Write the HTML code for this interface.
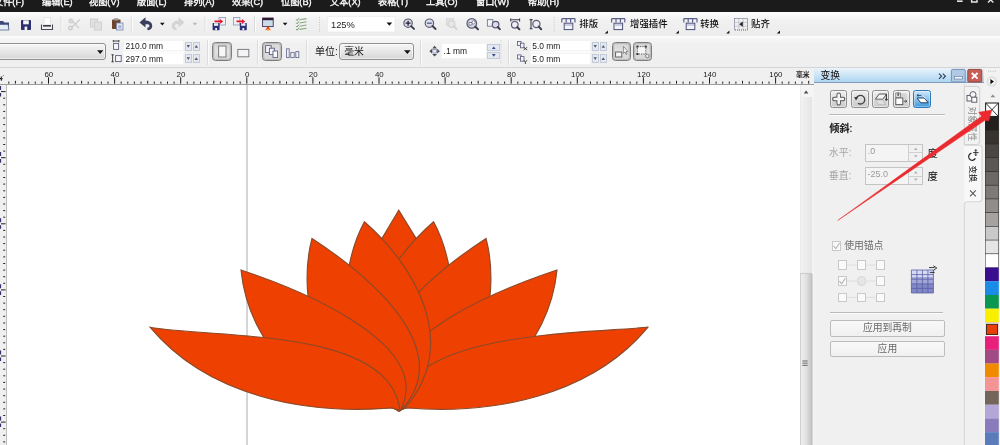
<!DOCTYPE html>
<html lang="zh">
<head>
<meta charset="utf-8">
<title>CorelDRAW</title>
<style>
html,body{margin:0;padding:0;}
body{width:1000px;height:445px;overflow:hidden;position:relative;background:#fff;
 font-family:"Liberation Sans","Noto Sans CJK SC",sans-serif;font-size:9.5px;color:#111;}
.abs{position:absolute;}
#menubar{left:0;top:0;width:1000px;height:12px;background:#1b1b1b;overflow:hidden;}
#menubar span{position:absolute;top:-4.3px;font-size:9.2px;line-height:12px;color:#fafafa;white-space:nowrap;-webkit-text-stroke:0.35px #fafafa;}
#tb1{left:0;top:12px;width:1000px;height:24px;background:linear-gradient(#fcfcfc,#f1f1f1 35%,#ececec);}
#tb2{left:0;top:36px;width:1000px;height:31px;background:linear-gradient(#fcfcfc,#fbfbfb 1.5px,#f6f6f6 2.5px,#f0f0f0 9px,#efefef);}
#ruler{left:0;top:66.5px;width:814px;height:18.5px;background:#f0f0f0;border-top:1px solid #d6d6d6;border-bottom:1px solid #9c9c9c;box-sizing:border-box;}
#lruler{left:0;top:85px;width:7px;height:360px;background:#f0f0f0;border-right:1.2px solid #bdbdbd;box-sizing:border-box;}
#canvas{left:7px;top:85px;width:794px;height:360px;background:#fff;}
#vscroll{left:801px;top:85px;width:13px;height:360px;background:#f0f0f0;}
#docker{left:814px;top:68px;width:148px;height:377px;background:#f0f0f0;}
#tabs{left:962px;top:68px;width:22px;height:377px;background:#f0f0f0;}
#palette{left:984px;top:68px;width:16px;height:377px;background:#f0f0f0;}
.tx{position:absolute;white-space:nowrap;}

.combo{position:absolute;box-sizing:border-box;border:1px solid #8f8f8f;border-radius:3px;background:linear-gradient(#f6f6f6,#e9e9e9 45%,#d6d6d6);box-shadow:inset 0 0 0 1px rgba(255,255,255,.55);}
.inp{position:absolute;background:#fff;box-sizing:border-box;border:1px solid #f3f3f3;}
.sp{position:absolute;box-sizing:border-box;background:#e4e8f1;border:1px solid #c3cad9;}
.pbtn{position:absolute;box-sizing:border-box;border:1px solid #7d7d7d;border-radius:3.5px;background:linear-gradient(#d2d2d2,#e3e3e3 50%,#d0d0d0);box-shadow:inset 0 0 0 1.5px #bdbdbd, inset 0 0 0 2.2px #e8e8e8;}
.vsep{position:absolute;width:1px;background:#dcdcdc;border-right:1px solid #fbfbfb;}
.t85{font-size:8.45px;line-height:10px;color:#1a1a1a;}

#dtitle{left:814px;top:68px;width:170px;height:14.4px;background:linear-gradient(#eaf4fb,#cfe6f7 45%,#aed5f1);border-bottom:1px solid #7d9dbb;box-sizing:content-box;}
.dbtn{position:absolute;box-sizing:border-box;width:17.6px;height:17.4px;top:90.2px;border:1px solid #8e8e8e;border-radius:2.5px;background:linear-gradient(#f0f0f0,#dcdcdc 50%,#c9c9c9);box-shadow:inset 0 0 0 1px rgba(255,255,255,.45);}
.dbtn.on{border-color:#2f79b8;background:linear-gradient(#cfe7f9,#8cc4ec 50%,#3f98da);box-shadow:inset 0 0 0 1px rgba(255,255,255,.35);}
.dinp{position:absolute;box-sizing:border-box;left:865px;width:58px;height:18px;border:1px solid #c4c4c4;background:#f4f4f4;}
.dinp i{position:absolute;right:0;top:0;width:13.4px;height:16px;border-left:1px solid #d0d0d0;background:#f1f1f1;}
.dinp i:before{content:"";position:absolute;left:0;top:7.6px;width:13.4px;height:1px;background:#d0d0d0;}
.cb{position:absolute;box-sizing:border-box;width:9.6px;height:9.6px;border:1px solid #c9c9c9;background:#fafafa;}
.abtn{position:absolute;box-sizing:border-box;left:829.8px;width:115.2px;height:16.2px;border:1px solid #bcbcbc;border-radius:2px;background:linear-gradient(#f9f9f9,#f0f0f0);text-align:center;font-size:9.8px;line-height:14px;color:#6a6a6a;}
.tbt{top:6px;font-size:9.4px;line-height:12px;color:#111;font-weight:500;}
</style>
</head>
<body>
<div id="root" style="position:absolute;left:0;top:0;width:1000px;height:445px;overflow:hidden;will-change:transform">
<div id="menubar" class="abs">
<span style="left:-6px">文件(F)</span>
<span style="left:42px">编辑(E)</span>
<span style="left:89px">视图(V)</span>
<span style="left:137px">版面(L)</span>
<span style="left:184px">排列(A)</span>
<span style="left:232px">效果(C)</span>
<span style="left:281px">位图(B)</span>
<span style="left:330px">文本(X)</span>
<span style="left:378px">表格(T)</span>
<span style="left:426px">工具(O)</span>
<span style="left:476px">窗口(W)</span>
<span style="left:528px">帮助(H)</span><svg class="abs" style="left:950px;top:0" width="50" height="6" viewBox="950 0 50 6"><rect x="957" y="0.4" width="5.6" height="1.6" fill="#e8e8e8"/><path d="M971.6,0 V2 H977 V0" stroke="#e8e8e8" stroke-width="1.4" fill="none"/><path d="M988,2.6 L990.6,0 M993.4,2.6 L990.8,0" stroke="#e8e8e8" stroke-width="1.4"/></svg>
</div>
<div id="tb1" class="abs">
<svg class="abs" style="left:0;top:0" width="1000" height="24" viewBox="0 12 1000 24">
<!-- open folder -->
<path d="M-3,21 L3,21 L4.5,22.5 L9,22.5 L9,30 L-3,30 Z" fill="#3b4778"/>
<path d="M-4,24.5 L8,24.5 L9,30 L-3,30 Z" fill="#e6ecf6" stroke="#56628e" stroke-width="0.8"/>
<!-- save -->
<rect x="21" y="20" width="10" height="10" rx="0.8" fill="#2d2f6e"/>
<rect x="23.2" y="20.3" width="5.6" height="4" fill="#f4f6fb"/>
<rect x="24.6" y="26.6" width="2.6" height="3.4" fill="#f4f6fb"/>
<!-- print -->
<rect x="44" y="17.5" width="6.5" height="7" fill="#fff" stroke="#d6d6d6" stroke-width="0.6"/>
<path d="M41.5,24.5 L41.5,29.5 L52.5,29.5 L52.5,24.5" fill="#f2f2f2" stroke="#4a4a55" stroke-width="1.1"/>
<rect x="43" y="25" width="8" height="1.6" fill="#3c3c46"/>
<!-- sep -->
<rect x="60.6" y="16" width="1" height="16" fill="#dadada"/><rect x="61.6" y="16" width="1" height="16" fill="#fdfdfd"/>
<!-- cut disabled -->
<g stroke="#cfcfcf" stroke-width="1.4" fill="none"><path d="M70,19 L79,28 M80,19.5 L71,28"/><circle cx="70.5" cy="28" r="1.8"/><circle cx="71" cy="21" r="1.8"/></g>
<!-- copy disabled -->
<g fill="#e1e1e1" stroke="#cfcfcf" stroke-width="0.9"><rect x="90.5" y="19" width="7" height="8"/><rect x="94.5" y="22" width="7" height="8"/></g>
<!-- paste -->
<rect x="112" y="19.5" width="8.5" height="9.5" rx="0.8" fill="#70442a"/>
<rect x="114.2" y="18.2" width="4" height="2.4" fill="#9a9aa0"/>
<rect x="116.5" y="23" width="6.5" height="7" fill="#dfe6f4" stroke="#7a86b0" stroke-width="0.8"/>
<rect x="118.3" y="25.3" width="3" height="3" fill="#a8b2d2"/>
<rect x="130.8" y="16" width="1" height="16" fill="#dadada"/><rect x="131.8" y="16" width="1" height="16" fill="#fdfdfd"/>
<!-- undo -->
<path d="M139.5,22.5 L145.5,17.2 L145.5,20.4 C150.5,20.4 152.6,23.5 152.2,26.5 C151.8,29 150,30.2 147.6,30.2 L147.2,27.8 C149,27.6 149.6,26.6 149.4,25.4 C149.2,24.3 148,24 145.5,24.2 L145.5,27.6 Z" fill="#3a3f60"/>
<path d="M160,22.8 L164.6,22.8 L162.3,25.4 Z" fill="#111"/>
<!-- redo disabled -->
<path d="M184.5,22.5 L178.5,17.2 L178.5,20.4 C173.5,20.4 171.4,23.5 171.8,26.5 C172.2,29 174,30.2 176.4,30.2 L176.8,27.8 C175,27.6 174.4,26.6 174.6,25.4 C174.8,24.3 176,24 178.5,24.2 L178.5,27.6 Z" fill="#d4d4d4"/>
<path d="M192.6,22.8 L197.2,22.8 L194.9,25.4 Z" fill="#b9b9b9"/>
<rect x="204.6" y="16" width="1" height="16" fill="#dadada"/><rect x="205.6" y="16" width="1" height="16" fill="#fdfdfd"/>
<!-- import -->
<rect x="219" y="17.5" width="6.5" height="7.5" fill="#eef1f7" stroke="#8d97b5" stroke-width="0.8"/>
<rect x="212.6" y="23" width="7" height="7.2" rx="0.6" fill="#2d3278"/>
<rect x="214" y="23.2" width="4.2" height="2.6" fill="#eef1f7"/><rect x="215.2" y="28" width="1.8" height="2.2" fill="#eef1f7"/>
<path d="M214.5,20.6 L220,20.6 L220,19 L223.2,21.4 L220,23.8 L220,22.2 L214.5,22.2 Z" fill="#e0182a"/>
<!-- export -->
<rect x="233.4" y="17.5" width="6.5" height="7.5" fill="#eef1f7" stroke="#8d97b5" stroke-width="0.8"/>
<rect x="239.8" y="23" width="7" height="7.2" rx="0.6" fill="#2d3278"/>
<rect x="241.2" y="23.2" width="4.2" height="2.6" fill="#eef1f7"/><rect x="242.4" y="28" width="1.8" height="2.2" fill="#eef1f7"/>
<path d="M236.5,20.6 L242,20.6 L242,19 L245.2,21.4 L242,23.8 L242,22.2 L236.5,22.2 Z" fill="#e0182a"/>
<rect x="254" y="16" width="1" height="16" fill="#dadada"/><rect x="255" y="16" width="1" height="16" fill="#fdfdfd"/>
<!-- app launcher -->
<rect x="262.6" y="18" width="10.6" height="8.6" fill="#c9dcea" stroke="#4a3050" stroke-width="0.9"/>
<rect x="262.6" y="18" width="10.6" height="2.2" fill="#2a1830"/>
<path d="M265,30.4 L268,26 L271,30.4 L268,29 Z" fill="#e83a10"/><circle cx="268" cy="29.6" r="1.2" fill="#f6a020"/>
<path d="M282.8,22.8 L287.4,22.8 L285.1,25.4 Z" fill="#111"/>
<!-- welcome lines -->
<g stroke="#8aa882" stroke-width="1.1" fill="none"><path d="M299.5,19.8 L306.5,18.6 M299.5,23 L306.5,21.8 M299.5,26.2 L306.5,25 M299.5,29.4 L306.5,28.2"/></g>
<g stroke="#6f9a66" stroke-width="1" fill="none"><path d="M296.2,19.4 L297.2,20.6 L298.8,18.2 M296.2,22.6 L297.2,23.8 L298.8,21.4 M296.2,25.8 L297.2,27 L298.8,24.6 M296.2,29 L297.2,30.2 L298.8,27.8"/></g>
<path d="M319.5,17 L319.5,32" stroke="#c6c6c6" stroke-width="1" stroke-dasharray="1,1.4"/>
<!-- zoom combo -->
<rect x="327.5" y="16.5" width="67.5" height="15.5" fill="#fff" stroke="#ececec" stroke-width="0.8"/>
<path d="M386.6,22.6 L392.2,22.6 L389.4,25.8 Z" fill="#111"/>
</svg>
<span class="tx" style="left:331px;top:6.6px;font-size:9.3px;line-height:12px;color:#222">125%</span>
<svg class="abs" style="left:0;top:0" width="1000" height="24" viewBox="0 12 1000 24">
<circle cx="408.1" cy="23.2" r="4.2" fill="#d9dcea" stroke="#5c5c74" stroke-width="1.2"/><path d="M411.1,26.1 L414.0,28.9" stroke="#3e3e4e" stroke-width="2" stroke-linecap="round"/><path d="M405.6,23.2 H410.6 M408.1,20.7 V25.7" stroke="#22222e" stroke-width="1.3"/>
<circle cx="429.4" cy="23.2" r="4.2" fill="#d9dcea" stroke="#5c5c74" stroke-width="1.2"/><path d="M432.5,26.0 L435.6,28.9" stroke="#3e3e4e" stroke-width="2" stroke-linecap="round"/><path d="M427,23.2 H431.8" stroke="#5a5a8a" stroke-width="1.3"/>
<rect x="446.5" y="18.5" width="7" height="7" fill="#e4e4e4" stroke="#d6d6d6" stroke-width="0.8"/><circle cx="451.5" cy="24.0" r="3.4" fill="#e6e6e6" stroke="#d3d3d3" stroke-width="1.2"/><path d="M453.9,26.4 L456.6,29.0" stroke="#d3d3d3" stroke-width="2" stroke-linecap="round"/>
<circle cx="471.8" cy="23.4" r="4.8" fill="#d9dcea" stroke="#5c5c74" stroke-width="1.2"/><path d="M475.3,26.7 L478.0,29.2" stroke="#3e3e4e" stroke-width="2" stroke-linecap="round"/><rect x="469" y="22.4" width="3" height="2.6" fill="#fff" stroke="#5c5c74" stroke-width="0.7"/><circle cx="473.6" cy="22.4" r="1.6" fill="#fff" stroke="#5c5c74" stroke-width="0.7"/>
<rect x="487.4" y="19.6" width="5.4" height="6.6" fill="#f3f4f8" stroke="#777a90" stroke-width="0.9"/><circle cx="495.6" cy="24.6" r="3.3" fill="#d9dcea" stroke="#5c5c74" stroke-width="1.2"/><path d="M497.8,27.0 L499.8,29.2" stroke="#3e3e4e" stroke-width="2" stroke-linecap="round"/>
<path d="M510.5,19.8 H519.8 M510.7,18.4 V21.4 M519.6,18.4 V21.4" stroke="#3e3e4e" stroke-width="1.1"/><circle cx="514.8" cy="24.8" r="3.3" fill="#eceef4" stroke="#5c5c74" stroke-width="1.2"/><path d="M517.2,27.1 L519.4,29.3" stroke="#3e3e4e" stroke-width="2" stroke-linecap="round"/>
<path d="M531,19.4 V29 M529.6,19.6 H532.6 M529.6,28.8 H532.6" stroke="#3e3e4e" stroke-width="1.1"/><circle cx="536.4" cy="24.0" r="3.6" fill="#eceef4" stroke="#5c5c74" stroke-width="1.2"/><path d="M538.8,26.6 L541.2,29.2" stroke="#3e3e4e" stroke-width="2" stroke-linecap="round"/>
<path d="M554.2,17 L554.2,32" stroke="#c6c6c6" stroke-width="1" stroke-dasharray="1,1.4"/>
<g transform="translate(561.8,0)"><path d="M0,18.6 H13.2 M0,18.6 V22.4 M4.4,18.6 V22.4 M8.8,18.6 V22.4 M13.2,18.6 V22.4" stroke="#5a5f8a" stroke-width="1.2" fill="none"/><rect x="2.4" y="23.2" width="8.6" height="6.4" fill="#f4f5fa" stroke="#4a4f78" stroke-width="1"/><rect x="3.2" y="24" width="7" height="2" fill="#c9cde2"/></g><g transform="translate(611.6,0)"><path d="M0,18.6 H13.2 M0,18.6 V22.4 M4.4,18.6 V22.4 M8.8,18.6 V22.4 M13.2,18.6 V22.4" stroke="#5a5f8a" stroke-width="1.2" fill="none"/><rect x="2.4" y="23.2" width="8.6" height="6.4" fill="#f4f5fa" stroke="#4a4f78" stroke-width="1"/><rect x="3.2" y="24" width="7" height="2" fill="#c9cde2"/></g><g transform="translate(683.8,0)"><path d="M0,18.6 H13.2 M0,18.6 V22.4 M4.4,18.6 V22.4 M8.8,18.6 V22.4 M13.2,18.6 V22.4" stroke="#5a5f8a" stroke-width="1.2" fill="none"/><rect x="2.4" y="23.2" width="8.6" height="6.4" fill="#f4f5fa" stroke="#4a4f78" stroke-width="1"/><rect x="3.2" y="24" width="7" height="2" fill="#c9cde2"/></g><g transform="translate(734,0)"><rect x="0.5" y="18.5" width="13" height="11.5" fill="none" stroke="#555a80" stroke-width="1" stroke-dasharray="1,1"/><path d="M4.8,18.5 V30 M9.2,18.5 V30 M0.5,22.3 H13.5 M0.5,26.2 H13.5" stroke="#8a8eb0" stroke-width="0.7" stroke-dasharray="1,1"/><path d="M8.8,21.6 L8.8,26.8 L5.2,24.2 Z" fill="#222"/></g>
<path d="M604.7,33.4 L607.9,33.4 L607.9,30.6 Z" fill="#111"/><path d="M675.7,33.4 L678.9,33.4 L678.9,30.6 Z" fill="#111"/><path d="M726.2,33.4 L729.4,33.4 L729.4,30.6 Z" fill="#111"/><path d="M776.8,33.4 L780.0,33.4 L780.0,30.6 Z" fill="#111"/></svg>
<span class="tx tbt" style="left:579.3px">排版</span><span class="tx tbt" style="left:630.0px">增强插件</span><span class="tx tbt" style="left:700.2px">转换</span><span class="tx tbt" style="left:751.0px">贴齐</span>
</div>
<div id="tb2" class="abs">
<div class="combo" style="left:-6px;top:7.4px;width:111.5px;height:17px"></div>
<div class="inp" style="left:123px;top:4.0px;width:61.4px;height:11px"></div><div class="inp" style="left:123px;top:17.4px;width:61.4px;height:11.4px"></div>
<div class="abs" style="left:123px;top:14.5px;width:61.4px;height:3.5px;background:#fbfbfb"></div><div class="abs" style="left:529.8px;top:14.5px;width:61.4px;height:3.5px;background:#fbfbfb"></div><span class="tx t85" style="left:125.6px;top:5.0px">210.0 mm</span><span class="tx t85" style="left:125.6px;top:18.1px">297.0 mm</span>
<div class="sp" style="left:184.9px;top:5.7px;width:6.8px;height:9.0px"></div><div class="sp" style="left:192.9px;top:5.7px;width:6.8px;height:9.0px"></div><div class="sp" style="left:184.9px;top:18.0px;width:6.8px;height:8.9px"></div><div class="sp" style="left:192.9px;top:18.0px;width:6.8px;height:8.9px"></div>
<div class="vsep" style="left:207px;top:4px;height:25px"></div><div class="vsep" style="left:257px;top:4px;height:25px"></div><div class="vsep" style="left:305.6px;top:4px;height:25px"></div><div class="vsep" style="left:420.2px;top:4px;height:25px"></div><div class="vsep" style="left:508px;top:4px;height:25px"></div>
<div class="pbtn" style="left:212.4px;top:6.2px;width:19.6px;height:19px"></div><div class="pbtn" style="left:262px;top:6.2px;width:19.5px;height:19px"></div>
<div class="pbtn" style="left:612px;top:6.2px;width:19.3px;height:19px"></div><div class="pbtn" style="left:633px;top:6.2px;width:19.3px;height:19px"></div>
<span class="tx" style="left:315px;top:10.2px;font-size:10px;line-height:12px;color:#111">单位:</span>
<div class="combo" style="left:339.3px;top:7.4px;width:74.7px;height:17px"></div><span class="tx" style="left:344.2px;top:10.0px;font-size:9.8px;line-height:12px;color:#111">毫米</span>
<div class="inp" style="left:440.6px;top:7.4px;width:46px;height:16px"></div><span class="tx t85" style="left:443.6px;top:10.3px">.1 mm</span>
<div class="sp" style="left:487.4px;top:8.2px;width:12.8px;height:7px"></div><div class="sp" style="left:487.4px;top:15.8px;width:12.8px;height:7px"></div>
<div class="inp" style="left:529.8px;top:4.0px;width:61.4px;height:11px"></div><div class="inp" style="left:529.8px;top:17.4px;width:61.4px;height:11.4px"></div>
<span class="tx t85" style="left:532.2px;top:5.0px">5.0 mm</span><span class="tx t85" style="left:532.2px;top:18.1px">5.0 mm</span>
<div class="sp" style="left:591.8px;top:5.7px;width:6.8px;height:9.0px"></div><div class="sp" style="left:599.8px;top:5.7px;width:7.0px;height:9.0px"></div><div class="sp" style="left:591.8px;top:18.0px;width:6.8px;height:8.9px"></div><div class="sp" style="left:599.8px;top:18.0px;width:7.0px;height:8.9px"></div>
<svg class="abs" style="left:0;top:0" width="1000" height="32" viewBox="0 36 1000 32">
<path d="M97.1,50.3 L103.3,50.3 L100.2,54.1 Z" fill="#111"/><path d="M404.0,50.3 L410.6,50.3 L407.3,54.1 Z" fill="#111"/>
<path d="M186.6,45.1 L190.0,45.1 L188.3,47.7 Z" fill="#555a66"/><path d="M194.6,47.7 L198.0,47.7 L196.3,45.1 Z" fill="#555a66"/><path d="M186.6,57.3 L190.0,57.3 L188.3,59.9 Z" fill="#555a66"/><path d="M194.6,59.9 L198.0,59.9 L196.3,57.3 Z" fill="#555a66"/><path d="M593.5,45.1 L596.9,45.1 L595.2,47.7 Z" fill="#555a66"/><path d="M601.6,47.7 L605.0,47.7 L603.3,45.1 Z" fill="#555a66"/><path d="M593.5,57.3 L596.9,57.3 L595.2,59.9 Z" fill="#555a66"/><path d="M601.6,59.9 L605.0,59.9 L603.3,57.3 Z" fill="#555a66"/><path d="M491.9,49.1 L495.7,49.1 L493.8,46.5 Z" fill="#3a4a8a"/><path d="M491.9,54.1 L495.7,54.1 L493.8,56.7 Z" fill="#3a4a8a"/>
<rect x="113.6" y="43.4" width="5" height="6" fill="#f6f6fa" stroke="#5a5f7a" stroke-width="0.9"/><path d="M113.2,41 H119 M113.3,40 V42.2 M118.9,40 V42.2" stroke="#333" stroke-width="0.9" fill="none"/>
<rect x="115.6" y="55.6" width="5.6" height="6" fill="#f6f6fa" stroke="#5a5f7a" stroke-width="0.9"/><path d="M112.6,54.6 V62 M111.4,54.8 H113.8 M111.4,61.8 H113.8" stroke="#333" stroke-width="0.9" fill="none"/>
<rect x="218.6" y="46" width="7.4" height="11" fill="#f7f7f7" stroke="#7c7c7c" stroke-width="1"/>
<rect x="237.8" y="49.4" width="11" height="7.4" fill="#f4f4f4" stroke="#7c7c84" stroke-width="1"/>
<rect x="265.6" y="45.6" width="5.6" height="7" fill="#f4f4f8" stroke="#5a5f80" stroke-width="0.9"/><rect x="269.4" y="48.2" width="5" height="6.4" fill="#f4f4f8" stroke="#5a5f80" stroke-width="0.9"/><rect x="273" y="51" width="4.6" height="6.4" fill="#fdfdfd" stroke="#5a5f80" stroke-width="0.9"/>
<g fill="#f4f4f8" stroke="#6a6f90" stroke-width="0.9"><rect x="286.6" y="48.8" width="2.6" height="8.8"/><rect x="290.8" y="52.6" width="3.4" height="5"/><rect x="295.8" y="51.6" width="3" height="6"/></g>
<g fill="#4a4a5a"><path d="M434.6,45.8 L437,48.4 L432.2,48.4 Z"/><path d="M434.6,56.6 L437,54 L432.2,54 Z"/><path d="M429.4,51.2 L432,48.8 L432,53.6 Z"/><path d="M439.8,51.2 L437.2,48.8 L437.2,53.6 Z"/></g><rect x="432.8" y="49.4" width="3.6" height="3.6" fill="#e9ebf5" stroke="#7a7f9a" stroke-width="0.7"/>
<path d="M501,40 V64" stroke="#d4d4d4" stroke-width="1.2" stroke-dasharray="1,1.2"/>
<g transform="translate(517,41.0)"><rect x="0.5" y="0.5" width="3.6" height="4" fill="#f2f2f8" stroke="#555a78" stroke-width="0.8"/><rect x="3.4" y="2.2" width="3.6" height="4.6" fill="#f2f2f8" stroke="#555a78" stroke-width="0.8"/><path d="M6.6,6.2 L10.2,9 M10.2,6.2 L6.6,9" stroke="#333" stroke-width="0.9"/></g><g transform="translate(517,54.4)"><rect x="0.5" y="0.5" width="3.6" height="4" fill="#f2f2f8" stroke="#555a78" stroke-width="0.8"/><rect x="3.4" y="2.2" width="3.6" height="4.6" fill="#f2f2f8" stroke="#555a78" stroke-width="0.8"/><path d="M6.8,5.8 L8.4,7.8 L10,5.8 M8.4,7.8 V9.6" stroke="#333" stroke-width="0.9" fill="none"/></g>
<rect x="615.6" y="52" width="6.2" height="5" fill="#f5f5f5" stroke="#555" stroke-width="0.9"/><path d="M623.4,46.4 L623.4,53.4 L625,52 L626.2,54.6 L627.2,54 L626,51.6 L628,51.4 Z" fill="#f2f2f2" stroke="#6a6a72" stroke-width="0.7"/><path d="M626,44.4 H628.6 V50" stroke="#b5b5b5" stroke-width="0.7" fill="none" stroke-dasharray="1,1"/>
<rect x="637.4" y="46.6" width="8.4" height="7.4" fill="#f6f6f6" stroke="#444" stroke-width="0.8" stroke-dasharray="1.4,1"/><g fill="#333"><rect x="636.4" y="45.6" width="2" height="2"/><rect x="644.8" y="45.6" width="2" height="2"/><rect x="636.4" y="53" width="2" height="2"/></g><circle cx="647.4" cy="56" r="1.8" fill="#eee" stroke="#555" stroke-width="0.7"/>
</svg>
</div>
<div id="ruler" class="abs">
<svg class="abs" style="left:0;top:-0.5px" width="814" height="18" viewBox="0 67 814 18">
<path d="M8.8,81.6 V83.7 M15.4,80.8 V83.7 M22.1,81.6 V83.7 M28.7,81.6 V83.7 M35.3,81.6 V83.7 M41.9,81.6 V83.7 M48.5,77.3 V83.7 M55.1,81.6 V83.7 M61.7,81.6 V83.7 M68.3,81.6 V83.7 M74.9,81.6 V83.7 M81.6,80.8 V83.7 M88.2,81.6 V83.7 M94.8,81.6 V83.7 M101.4,81.6 V83.7 M108.0,81.6 V83.7 M114.6,77.3 V83.7 M121.2,81.6 V83.7 M127.8,81.6 V83.7 M134.4,81.6 V83.7 M141.0,81.6 V83.7 M147.7,80.8 V83.7 M154.3,81.6 V83.7 M160.9,81.6 V83.7 M167.5,81.6 V83.7 M174.1,81.6 V83.7 M180.7,77.3 V83.7 M187.3,81.6 V83.7 M193.9,81.6 V83.7 M200.5,81.6 V83.7 M207.1,81.6 V83.7 M213.8,80.8 V83.7 M220.4,81.6 V83.7 M227.0,81.6 V83.7 M233.6,81.6 V83.7 M240.2,81.6 V83.7 M246.8,77.3 V83.7 M253.4,81.6 V83.7 M260.0,81.6 V83.7 M266.6,81.6 V83.7 M273.2,81.6 V83.7 M279.9,80.8 V83.7 M286.5,81.6 V83.7 M293.1,81.6 V83.7 M299.7,81.6 V83.7 M306.3,81.6 V83.7 M312.9,77.3 V83.7 M319.5,81.6 V83.7 M326.1,81.6 V83.7 M332.7,81.6 V83.7 M339.3,81.6 V83.7 M346.0,80.8 V83.7 M352.6,81.6 V83.7 M359.2,81.6 V83.7 M365.8,81.6 V83.7 M372.4,81.6 V83.7 M379.0,77.3 V83.7 M385.6,81.6 V83.7 M392.2,81.6 V83.7 M398.8,81.6 V83.7 M405.4,81.6 V83.7 M412.1,80.8 V83.7 M418.7,81.6 V83.7 M425.3,81.6 V83.7 M431.9,81.6 V83.7 M438.5,81.6 V83.7 M445.1,77.3 V83.7 M451.7,81.6 V83.7 M458.3,81.6 V83.7 M464.9,81.6 V83.7 M471.5,81.6 V83.7 M478.2,80.8 V83.7 M484.8,81.6 V83.7 M491.4,81.6 V83.7 M498.0,81.6 V83.7 M504.6,81.6 V83.7 M511.2,77.3 V83.7 M517.8,81.6 V83.7 M524.4,81.6 V83.7 M531.0,81.6 V83.7 M537.6,81.6 V83.7 M544.2,80.8 V83.7 M550.9,81.6 V83.7 M557.5,81.6 V83.7 M564.1,81.6 V83.7 M570.7,81.6 V83.7 M577.3,77.3 V83.7 M583.9,81.6 V83.7 M590.5,81.6 V83.7 M597.1,81.6 V83.7 M603.7,81.6 V83.7 M610.4,80.8 V83.7 M617.0,81.6 V83.7 M623.6,81.6 V83.7 M630.2,81.6 V83.7 M636.8,81.6 V83.7 M643.4,77.3 V83.7 M650.0,81.6 V83.7 M656.6,81.6 V83.7 M663.2,81.6 V83.7 M669.8,81.6 V83.7 M676.5,80.8 V83.7 M683.1,81.6 V83.7 M689.7,81.6 V83.7 M696.3,81.6 V83.7 M702.9,81.6 V83.7 M709.5,77.3 V83.7 M716.1,81.6 V83.7 M722.7,81.6 V83.7 M729.3,81.6 V83.7 M735.9,81.6 V83.7 M742.5,80.8 V83.7 M749.2,81.6 V83.7 M755.8,81.6 V83.7 M762.4,81.6 V83.7 M769.0,81.6 V83.7 M775.6,77.3 V83.7 M782.2,81.6 V83.7 M788.8,81.6 V83.7 M795.4,81.6 V83.7 M802.0,81.6 V83.7 M808.7,80.8 V83.7 " stroke="#1c1c1c" stroke-width="1" fill="none"/>
<text x="48.8" y="76.6" text-anchor="middle" font-size="7.9" fill="#1a1a1a" font-family="Liberation Sans, sans-serif">60</text><text x="114.9" y="76.6" text-anchor="middle" font-size="7.9" fill="#1a1a1a" font-family="Liberation Sans, sans-serif">40</text><text x="181.0" y="76.6" text-anchor="middle" font-size="7.9" fill="#1a1a1a" font-family="Liberation Sans, sans-serif">20</text><text x="247.1" y="76.6" text-anchor="middle" font-size="7.9" fill="#1a1a1a" font-family="Liberation Sans, sans-serif">0</text><text x="313.2" y="76.6" text-anchor="middle" font-size="7.9" fill="#1a1a1a" font-family="Liberation Sans, sans-serif">20</text><text x="379.3" y="76.6" text-anchor="middle" font-size="7.9" fill="#1a1a1a" font-family="Liberation Sans, sans-serif">40</text><text x="445.4" y="76.6" text-anchor="middle" font-size="7.9" fill="#1a1a1a" font-family="Liberation Sans, sans-serif">60</text><text x="511.5" y="76.6" text-anchor="middle" font-size="7.9" fill="#1a1a1a" font-family="Liberation Sans, sans-serif">80</text><text x="577.6" y="76.6" text-anchor="middle" font-size="7.9" fill="#1a1a1a" font-family="Liberation Sans, sans-serif">100</text><text x="643.7" y="76.6" text-anchor="middle" font-size="7.9" fill="#1a1a1a" font-family="Liberation Sans, sans-serif">120</text><text x="709.8" y="76.6" text-anchor="middle" font-size="7.9" fill="#1a1a1a" font-family="Liberation Sans, sans-serif">140</text><text x="775.9" y="76.6" text-anchor="middle" font-size="7.9" fill="#1a1a1a" font-family="Liberation Sans, sans-serif">160</text>
<rect x="793" y="69" width="19" height="9.6" fill="#f0f0f0"/><text x="796" y="76.6" font-size="6.8" font-weight="bold" fill="#222" font-family="Liberation Sans, Noto Sans CJK SC, sans-serif">毫米</text>
<path d="M0,78.6 H2.6 M1.3,76.6 V80.8" stroke="#223" stroke-width="1.1"/><path d="M2.6,76.2 L3.8,75.4" stroke="#555" stroke-width="0.8"/>
</svg>
</div>
<div id="lruler" class="abs"><svg class="abs" style="left:0;top:0" width="7" height="360" viewBox="0 85 7 360"><path d="M1,91.6 H5.6 M3.2,98.2 H5.2 M3.2,104.8 H5.2 M3.2,111.4 H5.2 M3.2,118.0 H5.2 M3.2,124.6 H5.2 M3.2,131.3 H5.2 M3.2,137.9 H5.2 M3.2,144.5 H5.2 M3.2,151.1 H5.2 M1,157.7 H5.6 M3.2,164.3 H5.2 M3.2,170.9 H5.2 M3.2,177.5 H5.2 M3.2,184.1 H5.2 M3.2,190.8 H5.2 M3.2,197.4 H5.2 M3.2,204.0 H5.2 M3.2,210.6 H5.2 M3.2,217.2 H5.2 M1,223.8 H5.6 M3.2,230.4 H5.2 M3.2,237.0 H5.2 M3.2,243.6 H5.2 M3.2,250.2 H5.2 M3.2,256.9 H5.2 M3.2,263.5 H5.2 M3.2,270.1 H5.2 M3.2,276.7 H5.2 M3.2,283.3 H5.2 M1,289.9 H5.6 M3.2,296.5 H5.2 M3.2,303.1 H5.2 M3.2,309.7 H5.2 M3.2,316.3 H5.2 M3.2,323.0 H5.2 M3.2,329.6 H5.2 M3.2,336.2 H5.2 M3.2,342.8 H5.2 M3.2,349.4 H5.2 M1,356.0 H5.6 M3.2,362.6 H5.2 M3.2,369.2 H5.2 M3.2,375.8 H5.2 M3.2,382.4 H5.2 M3.2,389.1 H5.2 M3.2,395.7 H5.2 M3.2,402.3 H5.2 M3.2,408.9 H5.2 M3.2,415.5 H5.2 M1,422.1 H5.6 M3.2,428.7 H5.2 M3.2,435.3 H5.2 M3.2,441.9 H5.2 " stroke="#222" stroke-width="1" fill="none"/><path d="M0.5,86.0 V90.0 M0.5,93.0 V96.6 M0.5,152.1 V156.1 M0.5,159.1 V162.7 M0.5,218.2 V222.2 M0.5,225.2 V228.8 M0.5,284.3 V288.3 M0.5,291.3 V294.9 M0.5,350.4 V354.4 M0.5,357.4 V361.0 M0.5,416.5 V420.5 M0.5,423.5 V427.1 " stroke="#30306a" stroke-width="1.2" fill="none"/></svg></div>
<div id="canvas" class="abs"><div class="abs" style="left:238.8px;top:0;width:2.2px;height:360px;background:#d5d5d5"></div></div>
<div id="vscroll" class="abs"></div>
<svg class="abs" style="left:962px;top:83px" width="22" height="362" viewBox="962 83 22 362">
<rect x="962" y="83" width="22" height="362" fill="#f0f0f0"/>
<path d="M962,145.3 H979 Q982,145.3 982,148.3 V198.8 Q982,201.8 979,201.8 H967.3 Q964.3,201.8 964.3,204.8 V445 H962 Z" fill="#f8f8f8"/><rect x="962" y="83" width="2.3" height="362" fill="#f0f0f0"/>
<path d="M964.3,145.3 H979 Q982,145.3 982,148.3 V198.8 Q982,201.8 979,201.8 H967.3 Q964.3,201.8 964.3,204.8 V445" fill="none" stroke="#d6d6d6" stroke-width="1.1"/>
<path d="M964.4,86.4 H976.6 Q979.6,86.4 979.6,89.4 V141.6 Q979.6,144.6 976.6,144.6 H964.4 Z" fill="#f2f2f2" stroke="#cfcfcf" stroke-width="1"/>
<path d="M964.4,84 V145" stroke="#d6d6d6" stroke-width="1"/>
<rect x="967" y="95.4" width="5.6" height="5.6" fill="#f6f6fb" stroke="#50525e" stroke-width="0.9"/><circle cx="973" cy="94.6" r="3" fill="#f6f6fb" stroke="#50525e" stroke-width="0.9"/><rect x="971.8" y="97.2" width="5" height="5" fill="#fdfdfd" stroke="#50525e" stroke-width="0.9"/>
<text transform="translate(969.4,106.6) rotate(90)" font-size="8.6" fill="#8a8a8a" font-family="Liberation Sans, Noto Sans CJK SC, sans-serif">对象属性</text>
<path d="M975.4,158.4 A3.6,3.6 0 1 1 971.4,153.2" fill="none" stroke="#222" stroke-width="1.2"/><path d="M975.8,149.8 V155.4 M973,152.6 H978.6" stroke="#222" stroke-width="0.9"/><path d="M974.6,150.8 L975.8,149.4 L977,150.8 M974.6,154.4 L975.8,155.8 L977,154.4" stroke="#222" stroke-width="0.7" fill="none"/>
<text transform="translate(969.6,165.4) rotate(90)" font-size="8.4" fill="#111" font-family="Liberation Sans, Noto Sans CJK SC, sans-serif">变换</text>
<path d="M970,190.4 L975.8,196.4 M975.8,190.4 L970,196.4" stroke="#5a5a5a" stroke-width="1.1"/>
</svg>
<svg class="abs" style="left:983px;top:68px" width="17" height="377" viewBox="983 68 17 377">
<rect x="983" y="68" width="17" height="377" fill="#f2f2f2"/>
<path d="M988,71.4 H996" stroke="#c4c4c4" stroke-width="1.2" stroke-dasharray="1,1.3"/>
<defs><radialGradient id="pbg"><stop offset="0.45" stop-color="#fafafa"/><stop offset="1" stop-color="#d4d4d4"/></radialGradient></defs><circle cx="991.8" cy="81.6" r="5" fill="url(#pbg)"/><path d="M990.4,79 L994,81.6 L990.4,84.2 Z" fill="#111"/>
<path d="M990.4,97.2 L995.2,97.2 L992.8,94.4 Z" fill="#8a8a8a"/>
<rect x="985" y="116.2" width="13.9" height="151.3" fill="#2a2724"/>
<rect x="985.5" y="116.90" width="12.9" height="13.12" fill="#231f1d"/><rect x="985.5" y="130.62" width="12.9" height="13.12" fill="#38332f"/><rect x="985.5" y="144.34" width="12.9" height="13.12" fill="#4a4643"/><rect x="985.5" y="158.06" width="12.9" height="13.12" fill="#5b5754"/><rect x="985.5" y="171.78" width="12.9" height="13.12" fill="#6c6865"/><rect x="985.5" y="185.50" width="12.9" height="13.12" fill="#7e7a77"/><rect x="985.5" y="199.22" width="12.9" height="13.12" fill="#918d8a"/><rect x="985.5" y="212.94" width="12.9" height="13.12" fill="#a5a2a0"/><rect x="985.5" y="226.66" width="12.9" height="13.12" fill="#c9c9c9"/><rect x="985.5" y="240.38" width="12.9" height="13.12" fill="#e5e5e5"/><rect x="985.5" y="254.10" width="12.9" height="13.12" fill="#ffffff"/><rect x="985" y="267.52" width="13.8" height="13.77" fill="#3a0f8f"/><rect x="985" y="281.24" width="13.8" height="13.77" fill="#1a8be6"/><rect x="985" y="294.96" width="13.8" height="13.77" fill="#0a9850"/><rect x="985" y="308.68" width="13.8" height="13.77" fill="#f8f000"/><rect x="985" y="322.40" width="13.8" height="13.77" fill="#e84008"/><rect x="985" y="336.12" width="13.8" height="13.77" fill="#e8207c"/><rect x="985" y="349.84" width="13.8" height="13.77" fill="#a24a86"/><rect x="985" y="363.56" width="13.8" height="13.77" fill="#f28a00"/><rect x="985" y="377.28" width="13.8" height="13.77" fill="#f49494"/><rect x="985" y="391.00" width="13.8" height="13.77" fill="#74655a"/><rect x="985" y="404.72" width="13.8" height="13.77" fill="#b4a6d6"/><rect x="985" y="418.44" width="13.8" height="13.77" fill="#8a7cbc"/><rect x="985" y="432.16" width="13.8" height="13.77" fill="#5a7cba"/>
<rect x="985.6" y="103" width="12.8" height="13.4" fill="#fff" stroke="#1a1a1a" stroke-width="1"/><path d="M985.6,103 L998.4,116.4 M998.4,103 L985.6,116.4" stroke="#1a1a1a" stroke-width="0.9"/>
<rect x="984.6" y="322.40" width="15" height="13.72" fill="#f6f6f6"/><rect x="986.4" y="324.30" width="11.2" height="10.12" fill="#e84008" stroke="#3a2418" stroke-width="1"/></svg>
<svg class="abs" style="left:800px;top:85px" width="15" height="360" viewBox="800 85 15 360">
<defs><linearGradient id="trk" x1="0" y1="0" x2="1" y2="0"><stop offset="0" stop-color="#f3f3f3"/><stop offset="1" stop-color="#e5e5e5"/></linearGradient></defs><rect x="800" y="85" width="14.6" height="360" fill="#f5f5f5"/><rect x="799.8" y="97" width="12.4" height="348" fill="url(#trk)"/><path d="M814.5,83 V445" stroke="#d6d6d6" stroke-width="1"/>
<path d="M800.5,85 V445" stroke="#ececec" stroke-width="1"/>
<path d="M803.8,93.4 L808.4,93.4 L806.1,90.4 Z" fill="#4a4a4a"/>
<defs><linearGradient id="thg" x1="0" y1="0" x2="1" y2="0"><stop offset="0" stop-color="#c8c8c8"/><stop offset="0.14" stop-color="#ececec"/><stop offset="0.5" stop-color="#e2e2e2"/><stop offset="0.95" stop-color="#c3c3c3"/><stop offset="1" stop-color="#cfcfcf"/></linearGradient></defs><rect x="799.8" y="273.4" width="12.4" height="180" rx="1.2" fill="url(#thg)" stroke="#bdbdbd" stroke-width="0.7"/>
<path d="M802.4,361 H807.6 M802.4,363.2 H807.6 M802.4,365.4 H807.6" stroke="#5a5a5a" stroke-width="0.9"/>
</svg>
<div id="docker" class="abs"></div>
<div class="abs" style="left:814px;top:66.5px;width:186px;height:1px;background:#d4d4d4"></div><div id="dtitle" class="abs"></div>
<span class="tx" style="left:820.4px;top:69.6px;font-size:9.8px;line-height:12px;color:#0a0a0a">变换</span>
<svg class="abs" style="left:936px;top:68px" width="50" height="16" viewBox="936 68 50 16">
<path d="M939,73.6 L941.6,76.2 L939,78.8 M942.8,73.6 L945.4,76.2 L942.8,78.8" stroke="#2a3a5a" stroke-width="1.1" fill="none"/>
<rect x="951.4" y="69.4" width="13.8" height="12.6" rx="1.2" fill="#b0cae6" stroke="#7590b6" stroke-width="1"/>
<rect x="954.2" y="76.4" width="8.2" height="2.6" fill="#f4f8fc" stroke="#55719a" stroke-width="0.6"/>
<rect x="967.8" y="69.4" width="14" height="12.6" rx="1.2" fill="#c65e56" stroke="#9a4640" stroke-width="1"/>
<path d="M971.8,73 L977.6,78.6 M977.6,73 L971.8,78.6" stroke="#fff" stroke-width="1.8"/>
</svg>
<div class="dbtn" style="left:829.8px"></div><div class="dbtn" style="left:851.1px"></div><div class="dbtn" style="left:871.8px"></div><div class="dbtn" style="left:892.5px"></div><div class="dbtn on" style="left:913px"></div>
<svg class="abs" style="left:828px;top:88px" width="106" height="22" viewBox="828 88 106 22">
<path d="M838.7,94.6 V103.4 M834.3,99 H843.1" stroke="#555" stroke-width="4.4" stroke-linecap="round"/><path d="M838.7,94.8 V103.2 M834.5,99 H842.9" stroke="#f4f4f4" stroke-width="2.6" stroke-linecap="round"/>
<path d="M856.3,98.6 A4.3,4.3 0 1 1 858,103.2" fill="none" stroke="#444" stroke-width="1.3"/><path d="M854.2,97 L858,97.2 L856,100.6 Z" fill="#333"/>
<path d="M875.4,99.2 L879.2,94 L886.6,94 L882.8,99.2 Z" fill="#f4f4f4" stroke="#555" stroke-width="1"/><path d="M875.4,100 L878.6,104.4 L885.6,104.4 L882.8,100 Z" fill="#e2e2e2" stroke="#b5b5b5" stroke-width="0.7"/><path d="M886.4,94 V99" stroke="#333" stroke-width="1"/><circle cx="886.4" cy="99.6" r="1.2" fill="#333"/>
<rect x="900.6" y="93.4" width="6" height="6" fill="#d4d4d4"/><rect x="895.8" y="93" width="4.6" height="4.2" fill="#f2f2f2" stroke="#666" stroke-width="0.7"/><rect x="895.8" y="98" width="7" height="6.6" fill="#fdfdfd" stroke="#555" stroke-width="0.9"/><path d="M898.2,92.4 V95.4 M897.2,94.4 L898.2,95.8 L899.2,94.4 M903.6,101.2 H906.6 M905.4,100 L906.8,101.2 L905.4,102.4" stroke="#333" stroke-width="0.8" fill="none"/>
<path d="M917,98 L924.4,98 L928.2,102.8 L920.8,102.8 Z" fill="#fff" stroke="#1f3f66" stroke-width="1"/><path d="M917,95.4 H921.4 M917,95.4 L918.4,94.2 M917,95.4 L918.4,96.6" stroke="#1f3f66" stroke-width="0.9" fill="none"/><path d="M922.6,95.6 L926.6,99.6" stroke="#eaf4fc" stroke-width="0.8"/>
</svg>
<div class="abs" style="left:828.8px;top:114.3px;width:116.4px;height:1px;background:#b9b9b9;border-bottom:1px solid #fcfcfc"></div>
<span class="tx" style="left:829.6px;top:123px;font-size:10px;line-height:12px;color:#0a0a0a;font-weight:500;-webkit-text-stroke:0.2px #0a0a0a">倾斜:</span>
<span class="tx" style="left:828.8px;top:146.8px;font-size:10px;line-height:12px;color:#a6a6a6">水平:</span>
<span class="tx" style="left:828.8px;top:169.8px;font-size:10px;line-height:12px;color:#a6a6a6">垂直:</span>
<div class="dinp" style="top:143.9px"><i></i></div><div class="dinp" style="top:167.2px"><i></i></div>
<span class="tx" style="left:867.8px;top:145.8px;font-size:9px;line-height:11px;color:#9a9a9a">.0</span>
<span class="tx" style="left:867.4px;top:169.2px;font-size:9px;line-height:11px;color:#9a9a9a">-25.0</span>
<span class="tx" style="left:927.6px;top:148.2px;font-size:10.4px;line-height:12px;color:#0a0a0a">度</span>
<span class="tx" style="left:927.6px;top:171.4px;font-size:10.4px;line-height:12px;color:#0a0a0a">度</span>
<svg class="abs" style="left:908px;top:143px" width="16" height="44" viewBox="908 143 16 44"><g fill="#b0b0b0"><path d="M914,150 L917.6,150 L915.8,147.6 Z"/><path d="M914,155.2 L917.6,155.2 L915.8,157.6 Z"/><path d="M914,173.4 L917.6,173.4 L915.8,171 Z"/><path d="M914,178.6 L917.6,178.6 L915.8,181 Z"/></g></svg>
<div class="cb" style="left:831.6px;top:241.2px"></div>
<span class="tx" style="left:844.2px;top:240.2px;font-size:9.8px;line-height:12px;color:#6e6e6e">使用锚点</span>
<svg class="abs" style="left:828px;top:238px" width="120" height="70" viewBox="828 238 120 70">
<path d="M833.6,246 L835.8,248.6 L839.6,243" stroke="#b4b4b4" stroke-width="1.1" fill="none"/>
<path d="M847,265 H856.6 M866,265 H875.6 M847,281.1 H856.6 M866,281.1 H875.6 M847,297.4 H856.6 M866,297.4 H875.6" stroke="#dcdcdc" stroke-width="0.9"/>
</svg>
<div class="cb" style="left:837.5px;top:260.3px"></div><div class="cb" style="left:856.5px;top:260.3px"></div><div class="cb" style="left:875.6px;top:260.3px"></div><div class="cb" style="left:837.5px;top:276.3px"></div><div class="cb" style="left:856.5px;top:276.3px;border-radius:50%;background:#e6e6e6;border-color:#d4d4d4"></div><div class="cb" style="left:875.6px;top:276.3px"></div><div class="cb" style="left:837.5px;top:292.7px"></div><div class="cb" style="left:856.5px;top:292.7px"></div><div class="cb" style="left:875.6px;top:292.7px"></div><svg class="abs" style="left:836px;top:275px" width="14" height="14" viewBox="836 275 14 14"><path d="M839.4,281.2 L841.6,283.8 L845.4,278.2" stroke="#b4b4b4" stroke-width="1.1" fill="none"/></svg><svg class="abs" style="left:909px;top:264px" width="32" height="32" viewBox="909 264 32 32"><rect x="911.4" y="270" width="22" height="23" fill="#a2a7d8"/><rect x="911.4" y="270" width="22" height="7" fill="#d6daf3"/><rect x="911.4" y="284" width="22" height="9" fill="#8088c6"/><path d="M911.4,270 H933.4 V293 H911.4 Z M916.9,270 V293 M922.4,270 V293 M927.9,270 V293 M911.4,274.6 H933.4 M911.4,279.2 H933.4 M911.4,283.8 H933.4 M911.4,288.4 H933.4" fill="none" stroke="#5a60a6" stroke-width="0.8"/><path d="M929,267.6 H934.6 M933.4,265.8 L936.8,268 L933.4,270.4 M934.6,272.4 H929.8" stroke="#222" stroke-width="0.9" fill="none"/></svg>
<div class="abs" style="left:829.8px;top:312.2px;width:112.8px;height:1px;background:#b9b9b9;border-bottom:1px solid #fcfcfc"></div>
<div class="abtn" style="top:320.4px">应用到再制</div>
<div class="abtn" style="top:340.5px">应用</div>

<!--LOTUS--><svg class="abs" style="left:0;top:0" width="1000" height="445" viewBox="0 0 1000 445"><g fill="#ee4000" stroke="#8a4a2a" stroke-width="1.15" stroke-linejoin="miter">
<path d="M398.7,210.2 L381.2,239.6 C374,256 372,330 392,407.8 L399,410.4 L406,407.8 C426,330 424,256 416.8,239.6 Z"/>
<path d="M433.6,221.8 C383.0,266.0 340.9,339.9 388.0,402.0 Q391.8,407.0 399,410.3 L406.0,407.8 C462.4,375.1 462.5,274.8 433.6,221.8 Z"/>
<path d="M486.0,238.4 C439.5,268.9 339.5,344.7 395.0,408.0 Q399.4,413.1 399,410.3 L406.0,407.8 C478.9,399.1 502.2,298.6 486.0,238.4 Z"/>
<path d="M557.0,270.0 C508.6,286.1 367.9,339.0 395.5,406.0 Q397.7,411.4 399,410.3 L406.0,407.8 C486.5,408.9 549.4,347.2 557.0,270.0 Z"/>
<path d="M648.4,327.0 C592.0,333.5 415.2,330.1 399.4,403.0 Q398.1,408.8 399,410.3 L406.0,407.8 C491.9,415.0 590.3,396.5 648.0,327.2 Z"/>
<path d="M364.4,221.8 C415.0,266.0 457.1,339.9 410.0,402.0 Q406.2,407.0 399,410.3 L392.0,407.8 C335.6,375.1 335.5,274.8 364.4,221.8 Z"/>
<path d="M312.0,238.4 C358.5,268.9 458.5,344.7 403.0,408.0 Q398.6,413.1 399,410.3 L392.0,407.8 C319.1,399.1 295.8,298.6 312.0,238.4 Z"/>
<path d="M241.0,270.0 C289.4,286.1 430.1,339.0 402.5,406.0 Q400.3,411.4 399,410.3 L392.0,407.8 C311.5,408.9 248.6,347.2 241.0,270.0 Z"/>
<path d="M150.0,327.2 C212.1,338.2 380.3,327.9 398.6,403.0 Q400.1,409.0 399,410.3 L392.0,407.8 C306.1,415.0 207.7,396.5 150.0,327.2 Z"/>
</g></svg><!--/LOTUS-->
<svg class="abs" style="left:0;top:0" width="1000" height="445" viewBox="0 0 1000 445"><path d="M837.8,220.4 L981.5,116.3 L978.7,112.3 L991.8,110 L988.8,120.8 L984.6,120.6 Z" fill="#ea2a2e" stroke="#ea2a2e" stroke-width="0.5" stroke-linejoin="round"/></svg>

</div>
</body>
</html>
